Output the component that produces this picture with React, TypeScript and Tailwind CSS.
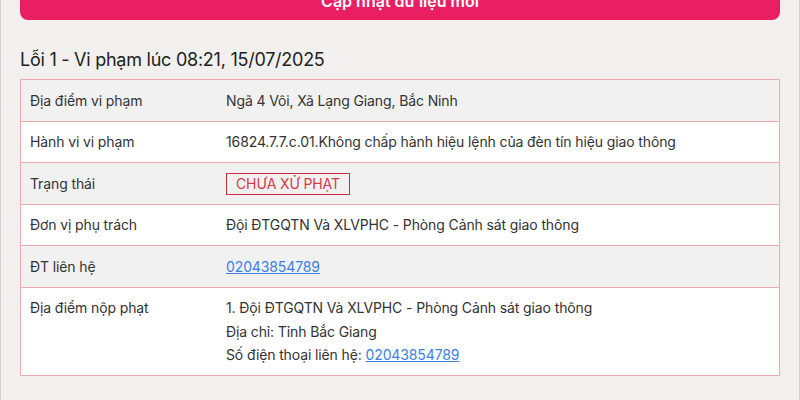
import React from "react";

const rows: { label: string; value: React.ReactNode; bg: string }[] = [
  { label: "Địa điểm vi phạm", value: "Ngã 4 Vôi, Xã Lạng Giang, Bắc Ninh", bg: "bg-[#f1f1f1]" },
  {
    label: "Hành vi vi phạm",
    value: "16824.7.7.c.01.Không chấp hành hiệu lệnh của đèn tín hiệu giao thông",
    bg: "bg-white",
  },
  {
    label: "Trạng thái",
    value: (
      <span className="inline-block border border-[#c9303f] px-[9px] leading-[20px] text-[#d8394a]">
        CHƯA XỬ PHẠT
      </span>
    ),
    bg: "bg-[#f1f1f1]",
  },
  { label: "Đơn vị phụ trách", value: "Đội ĐTGQTN Và XLVPHC - Phòng Cảnh sát giao thông", bg: "bg-white" },
  {
    label: "ĐT liên hệ",
    value: (
      <a href="#" className="text-[#3b7ee8] underline">
        02043854789
      </a>
    ),
    bg: "bg-[#f1f1f1]",
  },
  {
    label: "Địa điểm nộp phạt",
    value: (
      <div>
        <div>1. Đội ĐTGQTN Và XLVPHC - Phòng Cảnh sát giao thông</div>
        <div>Địa chỉ: Tỉnh Bắc Giang</div>
        <div>
          Số điện thoại liên hệ:{" "}
          <a href="#" className="text-[#3b7ee8] underline">
            02043854789
          </a>
        </div>
      </div>
    ),
    bg: "bg-white",
  },
];

const App: React.FC = () => {
  return (
    <div
      className="h-[400px] w-[800px] overflow-hidden border-x border-[#d4d0c8] bg-[#f1f0ee] px-[19px]"
      style={{ fontFamily: "Inter, 'Noto Sans', sans-serif" }}
    >
      <button className="mt-[-18px] flex h-[38px] w-full items-center justify-center rounded-b-[8px] bg-[#ea1f63] text-[16px] font-semibold text-white">
        Cập nhật dữ liệu mới
      </button>

      <h2 className="mt-[27px] text-[18px] leading-[26px] tracking-[-0.25px] text-[#222]">
        Lỗi 1 - Vi phạm lúc 08:21, 15/07/2025
      </h2>

      {/* Bảng chi tiết */}
      <div className="mt-[6px] border border-[#f0a9ae] text-[14px] tracking-[-0.12px] text-[#333]">
        {rows.map((r, i) => (
          <div
            key={i}
            className={`flex ${r.bg} ${i < rows.length - 1 ? "border-b border-[#f0a9ae]" : ""}`}
          >
            <div className="w-[205px] shrink-0 py-[8.5px] pl-[9px] leading-[23.5px]">{r.label}</div>
            <div className="py-[8.5px] leading-[23.5px]">{r.value}</div>
          </div>
        ))}
      </div>
    </div>
  );
};

export default App;
